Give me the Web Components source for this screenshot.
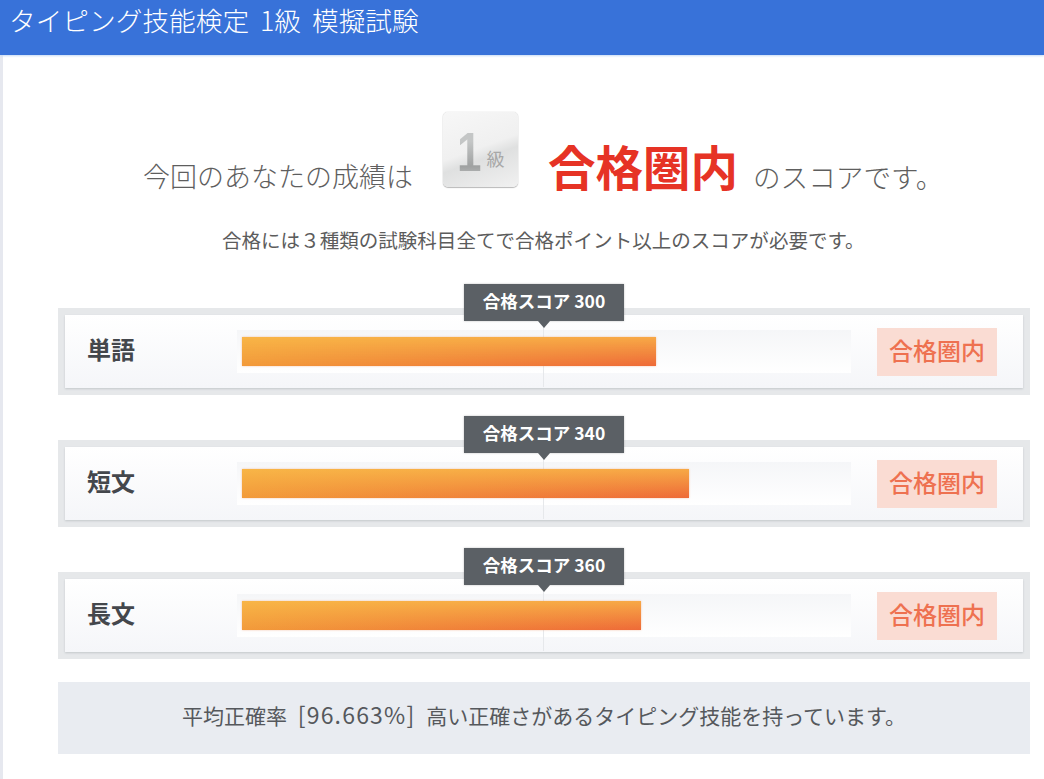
<!DOCTYPE html>
<html lang="ja">
<head>
<meta charset="utf-8">
<title>タイピング技能検定 1級 模擬試験</title>
<style>
html, body { margin: 0; background: #fff; }
body { font-family: "Noto Sans CJK JP", "Liberation Sans", sans-serif; height: 779px; overflow: hidden; }
</style>
</head>
<body>
<exam-page>
    <span slot="title">タイピング技能検定 1級 模擬試験</span>
    <result-hero></result-hero>
    <score-row label="単語" pass="300" percent="68"></score-row>
    <score-row label="短文" pass="340" percent="73.4"></score-row>
    <score-row label="長文" pass="360" percent="65.5"></score-row>
    <accuracy-note rate="96.663">高い正確さがあるタイピング技能を持っています。</accuracy-note>
</exam-page>
<script>
customElements.define("exam-page", class extends HTMLElement {
    constructor() {
        super()
            .attachShadow({ mode: "open" })
            .innerHTML = `
            <style>
            :host { display: block; }
            header {
                background: #3872d9;
                box-shadow: 0 1px 2px #c6daf5;
                color: #fff;
                font-size: 26.7px;
                font-weight: 300;
                height: 55px;
                line-height: 39px;
                padding-left: 9px;
                position: relative;
                white-space: nowrap;
                word-spacing: 5px;
            }
            main {
                border-left: 3px solid #e6e8ef;
                box-sizing: border-box;
                display: flex;
                flex-direction: column;
                height: 724px;
                padding: 57px 14px 0 55px;
            }
            </style>
            <header><slot name="title"></slot></header>
            <main><slot></slot></main>`;
    }
});

customElements.define("result-hero", class extends HTMLElement {
    constructor() {
        super()
            .attachShadow({ mode: "open" })
            .innerHTML = `
            <style>
            :host { display: block; color: #5e5e5e; }
            .line {
                align-items: flex-start;
                display: flex;
                height: 75px;
                padding-left: 85px;
                white-space: nowrap;
            }
            .txt { font-size: 27px; font-weight: 300; line-height: 40px; margin-top: 44px; }
            .txt.end { font-size: 27.6px; }
            .win { color: #e63325; font-size: 47.5px; font-weight: 700; line-height: 64px; margin: 22px 15px 0 30px; }
            .grade {
                background: linear-gradient(160deg, #f7f7f7 0%, #f0f0f0 48%, #dfe0e0 60%, #f1f1f1 100%);
                border-radius: 5px;
                box-shadow: 0 0 1px #aaa, 0 1px 1px #bbb;
                box-sizing: border-box;
                color: #a8a8a8;
                display: flex;
                align-items: center;
                height: 75px;
                margin-left: 30px;
                padding: 6px 0 0 14px;
                width: 75px;
            }
            .grade b {
                background: linear-gradient(#c4c6c6 30%, #9fa1a1 75%, #c0c2c2);
                -webkit-background-clip: text;
                background-clip: text;
                color: transparent;
                font: 700 55px/1 "Liberation Sans", sans-serif;
                transform: scaleX(.8);
                transform-origin: left center;
            }
            .grade span { font-size: 18px; margin: 11px 0 0 -1px; }
            p {
                color: #5c5c5c;
                font-size: 19.55px;
                font-weight: 400;
                line-height: 28px;
                margin: 39px 0 0;
                padding-left: 164px;
                white-space: nowrap;
            }
            </style>
            <div class="line">
                <span class="txt">今回のあなたの成績は</span>
                <div class="grade"><b>1</b><span>級</span></div>
                <span class="win">合格圏内</span>
                <span class="txt end">のスコアです。</span>
            </div>
            <p>合格には３種類の試験科目全てで合格ポイント以上のスコアが必要です。</p>`;
    }
});

customElements.define("score-row", class extends HTMLElement {
    constructor() {
        super()
            .attachShadow({ mode: "open" })
            .innerHTML = `
            <style>
            :host { display: block; margin-bottom: 45px; position: relative; }
            :host(:first-of-type) { margin-top: 54px; }
            .frame {
                background: #e6e8ea;
                box-sizing: border-box;
                height: 87px;
                padding: 7px;
            }
            .inner {
                align-items: center;
                background: linear-gradient(#fff, #f5f6f9);
                box-shadow: 0 1px 2px #c4c7cb;
                box-sizing: border-box;
                display: flex;
                height: 73px;
                padding-left: 22px;
            }
            .label { color: #44474c; font-size: 24px; font-weight: 700; padding-bottom: 7px; width: 150px; }
            .track {
                background: linear-gradient(#f5f6f8, #fff);
                box-sizing: border-box;
                height: 43px;
                padding: 7px 0 7px 5px;
                position: relative;
                width: 614px;
            }
            .mid { background: #e6e8eb; bottom: -14px; left: 306px; position: absolute; top: -15px; width: 1px; }
            .fill {
                background:
                    linear-gradient(rgba(250,190,75,.75), rgba(250,190,75,0)),
                    linear-gradient(90deg, #f29a3a, #ee6a38);
                box-shadow: 0 0 2px rgba(238,120,60,.4);
                height: 29px;
                position: relative;
            }
            .state {
                background: #fadcd3;
                color: #ee7150;
                font-size: 24px;
                font-weight: 500;
                height: 48px;
                line-height: 43px;
                margin-left: 26px;
                text-align: center;
                width: 120px;
            }
            .tip {
                background: #5b6065;
                box-shadow: 0 0 2px rgba(0,0,0,.25);
                color: #fff;
                font-size: 17.5px;
                font-weight: 700;
                height: 37px;
                left: 406px;
                line-height: 33px;
                position: absolute;
                text-align: center;
                top: -24px;
                width: 160px;
            }
            .tip::after {
                border: 6px solid transparent;
                border-bottom: 0;
                border-top: 7px solid #5b6065;
                content: "";
                left: 74px;
                position: absolute;
                top: 37px;
            }
            </style>
            <div class="frame">
                <div class="inner">
                    <div class="label"></div>
                    <div class="track"><div class="mid"></div><div class="fill"></div></div>
                    <div class="state">合格圏内</div>
                </div>
            </div>
            <div class="tip"></div>`;
    }
    connectedCallback() {
        const root = this.shadowRoot;
        root.querySelector(".label").textContent = this.getAttribute("label");
        root.querySelector(".tip").textContent = "合格スコア " + this.getAttribute("pass");
        root.querySelector(".fill").style.width = this.getAttribute("percent") + "%";
    }
});

customElements.define("accuracy-note", class extends HTMLElement {
    constructor() {
        super()
            .attachShadow({ mode: "open" })
            .innerHTML = `
            <style>
            :host {
                background: #e9ecf1;
                color: #55585c;
                display: block;
                font-size: 21px;
                height: 72px;
                line-height: 65px;
                margin-top: -22px;
                text-align: center;
                white-space: nowrap;
                word-spacing: 6px;
            }
            .rate { font-size: 23px; font-weight: 400; letter-spacing: 1.2px; }
            </style>
            平均正確率 <span class="rate"></span> <slot></slot>`;
    }
    connectedCallback() {
        this.shadowRoot.querySelector(".rate").textContent = "[" + this.getAttribute("rate") + "%]";
    }
});
</script>
</body>
</html>
